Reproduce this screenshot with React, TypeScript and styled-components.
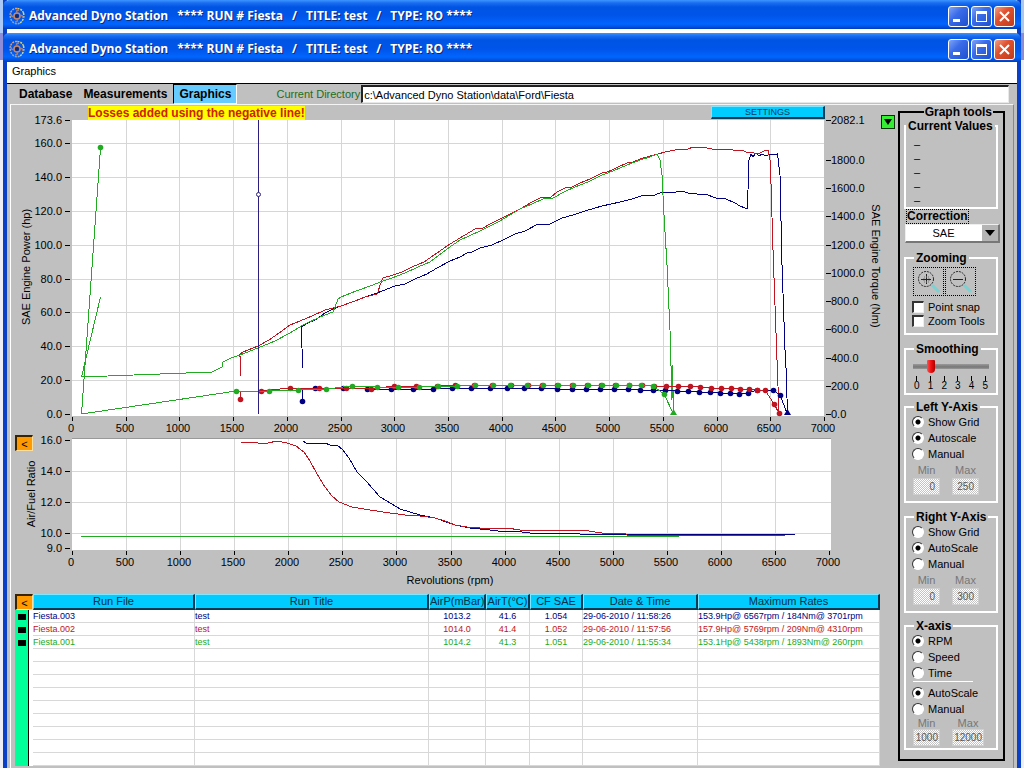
import React from "react";
import styled, { createGlobalStyle } from "styled-components";

const GlobalStyle = createGlobalStyle`
  *, *::before, *::after { box-sizing: border-box; }
  body {
    margin: 0;
    font-family: "Liberation Sans", Arial, sans-serif;
    font-size: 11px;
    color: #000;
  }
  button, input, select { font-family: inherit; font-size: inherit; color: inherit; border-radius: 0; margin: 0; }
`;

const NAVY = "#000080";
const RED = "#c01420";
const GREEN = "#22aa22";
const SILVER = "#c0c0c0";

/* ---------- window frame ---------- */

const Desktop = styled.div`
  min-height: 100vh;
  display: flex;
  flex-direction: column;
  padding: 0 3px;
  background: linear-gradient(#a9c8f5 0 33px, #8c8cd8 33px 60px, #eeeef6 60px);
`;

const BackWindow = styled.div`
  height: 33px;
  border: solid #0a3fc8;
  border-width: 0 4px;
  background: #fff;
`;

const Window = styled.main`
  flex: 1;
  display: flex;
  flex-direction: column;
  border: solid #0a3fc8;
  border-width: 0 4px;
  background: ${SILVER};
`;

const TitleBar = styled.header`
  display: flex;
  align-items: center;
  height: 29px;
  margin: 0 -4px;
  padding: 3px 6px 0 6px;
  border-radius: 6px 6px 0 0;
  background: linear-gradient(#3c95ff 0, #1a6df0 3px, #0054e3 7px, #0055ea 16px, #0066ff 24px, #0050e0 27px, #003cb8 29px);
`;

const TitleText = styled.h1`
  flex: 1;
  display: flex;
  gap: 9px;
  margin: 0 0 0 4px;
  font: 700 12px/18px "Open Sans", "Noto Sans", sans-serif;
  color: #fff;
  text-shadow: 1px 1px 0 #0a2a80;
  white-space: nowrap;
`;

const CaptionButtons = styled.div`
  display: flex;
  gap: 2px;
`;

const CaptionButton = styled.button<{ $close?: boolean }>`
  display: grid;
  place-items: center;
  width: 21px;
  height: 21px;
  padding: 0;
  border: 1px solid #fff;
  border-radius: 3px;
  background: ${(p) =>
    p.$close
      ? "linear-gradient(135deg, #f0a088, #e0512e 40%, #c03c1c)"
      : "linear-gradient(135deg, #7fa4f5, #3a6cea 40%, #1f50cc)"};
`;

const MenuBar = styled.nav`
  height: 21px;
  padding: 0 5px;
  background: #fff;
`;

const MenuItem = styled.button`
  display: block;
  height: 18px;
  padding: 0;
  border: 0;
  background: none;
`;

/* ---------- tab strip ---------- */

const TabStrip = styled.div`
  display: flex;
  align-items: center;
  gap: 1px;
  height: 21px;
  padding: 0 8px 0 7px;
  border-top: 1px solid #000;
`;

const Tab = styled.button<{ $active?: boolean }>`
  height: 20px;
  padding: 0 ${(p) => (p.$active ? 5 : 4)}px;
  border: 1px solid;
  border-color: ${(p) => (p.$active ? "#000 #fff #fff #000" : SILVER)};
  background: ${(p) => (p.$active ? "#66ccff" : SILVER)};
  font-size: 12px;
  font-weight: 700;
`;

const DirLabel = styled.label`
  margin-left: 38px;
  color: #1c6e1c;
`;

const DirInput = styled.input`
  flex: 1;
  min-width: 0;
  height: 18px;
  padding: 0 1px;
  border: solid;
  border-width: 2px 1px 1px 2px;
  border-color: #222 #e8e8e8 #e8e8e8 #222;
  background: #fff;
`;

/* ---------- body ---------- */

const Body = styled.div`
  flex: 1;
  display: grid;
  grid-template-columns: minmax(0, 1fr) 107px;
  align-items: start;
  margin: 0 3px;
  padding-right: 8px;
  border: solid;
  border-width: 1px 1px 0 1px;
  border-color: #f4f4f4 #888 #888 #fff;
`;

const NoticeRow = styled.div`
  display: flex;
  align-items: flex-start;
  height: 14px;
  padding: 0 3px 0 77px;
`;

const Notice = styled.strong`
  margin-top: 1px;
  background: #ffff00;
  color: #cc2200;
  font-size: 12px;
  line-height: 14px;
  white-space: nowrap;
`;

const SettingsButton = styled.button`
  width: 114px;
  height: 13px;
  margin: 1px 56px 0 auto;
  padding: 0;
  border: solid;
  border-width: 1px 2px 2px 1px;
  border-color: #7fe6ff #003c55 #003c55 #7fe6ff;
  background: #00ccff;
  color: #00405c;
  font-size: 9px;
  line-height: 9px;
`;

const ExpandButton = styled.button`
  display: grid;
  place-items: center;
  width: 14px;
  height: 14px;
  margin-top: 10px;
  padding: 0;
  border: 1px solid #003300;
  background: #33ee33;
`;

const ChartBox = styled.section`
  position: relative;
`;

const ChartSvg = styled.svg`
  display: block;
  width: 100%;
  height: auto;
  overflow: visible;
`;

const CollapseButton = styled.button<{ $overChart?: boolean }>`
  ${(p) => (p.$overChart ? "position: absolute; top: 1px; left: 4px;" : "display: block;")}
  width: 18px;
  height: 16px;
  padding: 0;
  border: solid;
  border-width: 2px 1px 1px 2px;
  border-color: #3a2400 #ffe0a0 #ffe0a0 #3a2400;
  background: #ff9900;
  font-size: 11px;
  line-height: 12px;
`;

/* ---------- runs table ---------- */

const RunTable = styled.table`
  width: calc(100% - 22px);
  margin-left: 4px;
  table-layout: fixed;
  border-collapse: separate;
  border-spacing: 0;
  background: #fff;
`;

const HeadCell = styled.th`
  height: 16px;
  padding: 0;
  border: solid;
  border-width: 1px 2px 2px 1px;
  border-color: #7fe6ff #003c55 #003c55 #7fe6ff;
  background: #00ccff;
  color: #003048;
  font-weight: 400;
  line-height: 13px;
  white-space: nowrap;
`;

const CornerCell = styled.th`
  height: 16px;
  padding: 0;
`;

const MarkerCell = styled.td`
  height: 13px;
  padding: 0 0 0 3px;
  line-height: 0;
  background: linear-gradient(to right, #00ff99 13px, #000 13px 14px, #fff 14px);
`;

const Marker = styled.span`
  display: block;
  width: 8px;
  height: 6px;
  background: #000;
`;

const Cell = styled.td<{ $color: string; $center?: boolean }>`
  height: 13px;
  padding: 0;
  border-right: 1px solid #d8d8d8;
  border-bottom: 1px solid #d8d8d8;
  color: ${(p) => p.$color};
  font-size: 9px;
  line-height: 12px;
  text-align: ${(p) => (p.$center ? "center" : "left")};
  white-space: nowrap;
`;

/* ---------- graph tools ---------- */

const Tools = styled.fieldset`
  display: flex;
  flex-direction: column;
  height: 656px;
  min-width: 0;
  margin: 0;
  padding: 0 5px 0 4px;
  border: 2px solid #000;
`;

const ToolsLegend = styled.legend`
  margin-left: auto;
  margin-right: 5px;
  padding: 0 1px;
  font-size: 12px;
  font-weight: 700;
  line-height: 14px;
`;

const Group = styled.fieldset<{ $height: number; $gap: number }>`
  height: ${(p) => p.$height}px;
  min-width: 0;
  margin: ${(p) => p.$gap}px 0 0;
  padding: 0 0 0 6px;
  border: 2px solid #fff;
`;

const GroupLegend = styled.legend<{ $wide?: boolean }>`
  margin-left: ${(p) => (p.$wide ? -6 : 2)}px;
  padding: 0 2px;
  font-size: 12px;
  font-weight: 700;
  line-height: 14px;
  white-space: nowrap;
`;

const ValueList = styled.ul`
  margin: 4px 0 0 2px;
  padding: 0;
  list-style: none;
  line-height: 14px;
`;

const CorrectionLabel = styled.label`
  align-self: flex-start;
  margin-left: 2px;
  border: 1px dotted #000;
  font-size: 12px;
  font-weight: 700;
  line-height: 13px;
`;

const SelectBox = styled.div`
  position: relative;
  margin: 0 -2px 0 1px;
  border: solid;
  border-width: 1px 2px 2px 1px;
  border-color: #eee #777 #777 #eee;
`;

const Select = styled.select`
  display: block;
  appearance: none;
  width: 100%;
  height: 16px;
  padding: 0 17px 0 0;
  border: 0;
  background: #fff;
  text-align: center;
  text-align-last: center;
`;

const SelectArrow = styled.span`
  position: absolute;
  top: 0;
  right: 0;
  display: grid;
  place-items: center;
  width: 16px;
  height: 16px;
  background: #b4b4b4;
  pointer-events: none;
`;

const ZoomButtons = styled.div`
  display: flex;
  gap: 1px;
  margin: 2px 0 4px 1px;
`;

const ZoomButton = styled.button`
  display: grid;
  place-items: center;
  width: 31px;
  height: 29px;
  padding: 0;
  border: 1px dotted #000;
  background: ${SILVER};
`;

const Option = styled.label<{ $tight?: boolean }>`
  display: flex;
  align-items: center;
  gap: 4px;
  height: ${(p) => (p.$tight ? 14 : 16)}px;
  white-space: nowrap;
`;

const Check = styled.input`
  appearance: none;
  width: 12px;
  height: 12px;
  border: solid;
  border-width: 2px 1px 1px 2px;
  border-color: #333 #eee #eee #333;
  background: #fff;
`;

const Radio = styled.input`
  appearance: none;
  width: 12px;
  height: 12px;
  border: 1px solid;
  border-color: #333 #fff #fff #333;
  border-radius: 50%;
  background: #fff;
  &:checked {
    background: radial-gradient(circle, #000 0 2px, #fff 3px);
  }
`;

const Slider = styled.input`
  display: block;
  appearance: none;
  width: 76px;
  height: 13px;
  margin: 4px 0 3px 1px;
  background: linear-gradient(transparent 4px, #999 4px, #777 7px, #999 9px, transparent 9px);
  &::-webkit-slider-thumb {
    appearance: none;
    width: 8px;
    height: 13px;
    border-radius: 1px 1px 4px 4px;
    background: linear-gradient(to right, #ff5050, #ee1111 50%, #b00000);
  }
`;

const Scale = styled.ol`
  display: flex;
  justify-content: space-between;
  width: 76px;
  margin: 0 0 0 1px;
  padding: 0 1px;
  list-style: none;
  font-size: 10px;
  line-height: 10px;
`;

const ScaleMark = styled.li`
  &::before {
    content: "";
    display: block;
    width: 1px;
    height: 5px;
    margin: 0 auto;
    background: #000;
  }
`;

const Limits = styled.div<{ $tight?: boolean }>`
  display: flex;
  gap: 12px;
  margin-left: 1px;
  line-height: ${(p) => (p.$tight ? 12 : 16)}px;
`;

const LimitField = styled.label<{ $wide?: boolean }>`
  display: flex;
  flex-direction: column;
  width: ${(p) => (p.$wide ? 32 : 27)}px;
  color: #777;
  text-align: center;
`;

const LimitInput = styled.input<{ $tight?: boolean }>`
  width: 100%;
  height: 17px;
  padding: 0 ${(p) => (p.$tight ? 1 : 4)}px 0 0;
  border: 1px solid #cfcfcf;
  background: repeating-conic-gradient(#fff 0 25%, #c4c4c4 0 50%) 0 0 / 2px 2px;
  color: #555;
  font-size: 10px;
  text-align: right;
`;

const Rule = styled.hr`
  width: 60px;
  height: 1px;
  margin: 0 0 3px 1px;
  border: 0;
  background: #fff;
`;

/* ---------- chart data (canvas units) ---------- */

type Pt = [number, number];

const powerRed =
  "240.5,376 240.5,357 239,355 243,352 258,346 269,340 279,333 290,325 300,321 312,316 325,310 341,306 355,301 365,297 377,294 378,292 380,285 383,278 393,275 402,272 412,267 424,262 437,253 450,244 460,238 475,229 479,228 483,228 490,224 500,219 510,214 522,208 532,202 540,198 551,197 557,192 565,188 572,187 580,183 590,179 602,173 607,172 612,170 618,167 627,163 633,162 640,159 650,156 658,154 665,152 675,150 688,149 693,147 707,148 712,149 733,150 738,151 742,150 748,153 752,152 756,154 760,153 764,151 768,150 770,160 771,184 773,250 776,333 779,413";
const powerGreen =
  "100.5,297 81.5,377 212,372 222,367 223,362 231,358 240,355 258,348 275,341 290,333 303,325 320,317 333,312 335,307 338,299 341,297 356,291 373,285 380,282 392,278 405,273 418,267 430,262 447,249 460,240 480,231 500,221 520,209 532,204 545,198 553,198 564,192 575,187 588,182 602,175 608,173 620,168 632,163 643,159 650,157 657,154 660,160 662,175 664,215 667,265 670,330 672,400 672.5,365 673.5,413";
const powerBlue =
  "302.5,368 301.5,327 308,323 315,320 325,313 333,309 341,306 355,301 365,297 377,293 395,286 405,284 415,279 427,274 437,268 450,261 460,257 467,253 472,252 480,248 492,245 505,239 515,234 525,231 538,224 550,224 562,218 573,215 585,211 602,206 611,204 620,202 632,199 641,196 655,195 662,192 670,193 682,191 688,193 697,194 705,194 716,198 726,199 735,203 740,206 745,208 747.5,208 748,190 749,160 751,154 753,157 756,153 759,156 762,154 766,156 770,154 773,155 777.5,154 780,175 782,265 785,350 786,368 787.5,413";

const torqueGreen: Pt[] = [
  [236, 391], [269, 391], [298, 390], [326, 389], [352, 386], [377, 387], [398, 387], [419, 387], [438, 386],
  [457, 386], [475, 385], [493, 385], [510, 385], [527, 385], [543, 385], [558, 385], [573, 385], [588, 385],
  [602, 385], [616, 385], [629, 385], [641, 385], [653, 386], [664, 394],
];
const torqueRed: Pt[] = [
  [261, 391], [290, 388], [319, 388], [346, 388], [371, 389], [394, 386], [416, 386], [437, 386], [455, 385],
  [474, 385], [492, 385], [511, 385], [528, 385], [542, 385], [557, 385], [572, 385], [587, 385], [601, 385],
  [615, 385], [629, 385], [642, 385], [654, 386], [666, 386], [678, 386], [690, 386], [700, 387], [711, 388],
  [721, 388], [731, 388], [740, 389], [749, 389], [757, 390], [765, 390], [774, 404], [779, 413],
];
const torqueBlue: Pt[] = [
  [315, 388], [343, 388], [367, 389], [391, 389], [413, 389], [433, 389], [452, 388], [471, 388], [490, 388],
  [507, 388], [524, 388], [541, 388], [557, 389], [572, 389], [586, 389], [600, 389], [614, 389], [628, 389],
  [640, 390], [653, 390], [665, 390], [677, 391], [688, 391], [699, 392], [710, 392], [720, 393], [730, 393],
  [739, 394], [748, 393], [757, 390], [773, 390], [780, 395],
];

const afrRed =
  "241,442 252,442 258,443 268,443 277,441 287,443 296,446 304,452 310,461 317,474 325,487 332,496 339,502 352,507 370,510 390,513 405,515 420,516 435,518 445,521 455,525 467,527 480,528 507,528 520,530 532,530 555,531 565,530 582,530 602,533 625,533 627,535 785,535";
const afrBlue =
  "303,441 306,443 325,443 330,445 338,446 342,449 349,458 357,472 366,481 380,497 392,504 400,509 410,512 420,515 435,518 455,525 470,528 490,530 505,532 513,531 530,533 560,534 573,533 580,534 630,534 792,535 795,534";

const thousands = Array.from({ length: 15 }, (_, i) => i * 500);
const rpmX = (rpm: number) => Math.round(72 + (rpm * 752) / 7000);
const afrX = (rpm: number) => Math.round(72 + (rpm * 757) / 7000);
const hpY = (hp: number) => Math.round(414 - (hp * 294) / 173.6);
const nmY = (nm: number) => Math.round(414 - (nm * 294) / 2082.1);
const afrY = (v: number) => Math.round(548 - (v - 9) * 15.5);

const join = (pts: Pt[]) => pts.map((p) => p.join(",")).join(" ");

const Line = styled.polyline`
  fill: none;
  stroke-width: 1;
  shape-rendering: crispEdges;
`;

const Grid = styled.path`
  fill: none;
  stroke: #d6d6d6;
  shape-rendering: crispEdges;
`;

const Ticks = styled(Grid)`
  stroke: #000;
`;

const Dots = ({ points, color }: { points: Pt[]; color: string }) => (
  <g fill={color}>
    {points.map(([x, y], i) => (
      <circle key={i} cx={x + 0.5} cy={y + 0.5} r={2.8} />
    ))}
  </g>
);

const PowerChart = () => {
  const hps = [173.6, 160, 140, 120, 100, 80, 60, 40, 20, 0];
  const nms = [2082.1, 1800, 1600, 1400, 1200, 1000, 800, 600, 400, 200, 0];
  return (
    <ChartSvg viewBox="11 119 887 315" role="img" aria-label="SAE engine power and torque by engine speed">
      <rect x={72} y={120} width={752} height={296} fill="#fff" />
      <Grid
        d={
          thousands.slice(1, -1).map((t) => `M${rpmX(t)}.5 120V416`).join("") +
          hps.slice(1, -1).map((v) => `M72 ${hpY(v)}.5H824`).join("")
        }
      />
      <Ticks
        d={
          thousands.map((t) => `M${rpmX(t)}.5 417V421`).join("") +
          hps.map((v) => `M65 ${hpY(v)}.5H70`).join("") +
          nms.map((v) => `M826 ${nmY(v)}.5H831`).join("")
        }
      />
      <g textAnchor="end">
        {hps.map((v) => <text key={v} x={62} y={hpY(v) + 4}>{v.toFixed(1)}</text>)}
      </g>
      <g>
        {nms.map((v) => <text key={v} x={831} y={nmY(v) + 4}>{v.toFixed(1)}</text>)}
      </g>
      <g textAnchor="middle">
        {thousands.map((t) => <text key={t} x={rpmX(t) - 1} y={432}>{t}</text>)}
      </g>
      <text textAnchor="middle" transform="translate(30 267) rotate(-90)">SAE Engine Power (hp)</text>
      <text textAnchor="middle" transform="translate(872 266) rotate(90)">SAE Engine Torque (Nm)</text>

      <Line points={powerBlue} stroke={NAVY} />
      <Line points={powerRed} stroke={RED} />
      <Line points={powerGreen} stroke={GREEN} />

      <Line points={"302.5,401 302.5,390 " + join(torqueBlue) + " 787,413"} stroke={NAVY} />
      <Dots points={[[302, 401], ...torqueBlue]} color={NAVY} />
      <path d="M784 415L787.500 409L791 415Z" fill={NAVY} />
      <Line points={"240.5,399 240.5,392 " + join(torqueRed)} stroke={RED} />
      <Dots points={[[240, 399], ...torqueRed]} color={RED} />
      <Line points={"100.500,148 81.500,414 223,393 " + join(torqueGreen) + " 673,413"} stroke={GREEN} />
      <Dots points={[[100, 147], ...torqueGreen]} color={GREEN} />
      <path d="M670 415L673.500 409L677 415Z" fill={GREEN} />

      <path d="M258.500 120V414" stroke="#2a1f80" fill="none" shapeRendering="crispEdges" />
      <circle cx={258.5} cy={194.5} r={2} fill="#fff" stroke="#2a1f80" />
    </ChartSvg>
  );
};

const AfrChart = () => {
  const ratios = [16, 14, 12, 10, 9];
  return (
    <ChartSvg viewBox="11 434 887 160" role="img" aria-label="Air/fuel ratio by engine speed">
      <rect x={72} y={439} width={759} height={111} fill="#fff" />
      <path d="M72 438.500H831" stroke="#999" />
      <Grid
        d={
          thousands.slice(1, -1).map((t) => `M${afrX(t)}.5 439V550`).join("") +
          ratios.slice(1, -1).map((v) => `M72 ${afrY(v)}.5H831`).join("")
        }
      />
      <Ticks
        d={
          thousands.map((t) => `M${afrX(t)}.5 551V555`).join("") +
          ratios.map((v) => `M65 ${afrY(v)}.5H70`).join("")
        }
      />
      <g textAnchor="end">
        {ratios.map((v) => <text key={v} x={62} y={afrY(v) + 4}>{v.toFixed(1)}</text>)}
      </g>
      <g textAnchor="middle">
        {thousands.map((t) => <text key={t} x={afrX(t) - 1} y={566}>{t}</text>)}
      </g>
      <text textAnchor="middle" transform="translate(35 494) rotate(-90)">Air/Fuel Ratio</text>
      <text textAnchor="middle" x={450} y={584}>Revolutions (rpm)</text>
      <Line points={afrBlue} stroke={NAVY} />
      <Line points={afrRed} stroke={RED} />
      <Line points="81,536.5 679,536.5" stroke={GREEN} />
    </ChartSvg>
  );
};

/* ---------- composed parts ---------- */

const AppLogo = () => (
  <svg width="16" height="18" viewBox="0 0 16 18" fill="none" strokeWidth="1.500" aria-hidden="true">
    <path d="M8 1.500C5 1 2.500 3 1.500 6" stroke="#e8a070" strokeDasharray="2 1" />
    <path d="M14.500 6C13.500 3 11 1.500 8 1.500" stroke="#d8d070" strokeDasharray="2 1" />
    <path d="M14.500 6C15.500 10 14 14 11 16" stroke="#c8d8a0" strokeDasharray="2 1" />
    <path d="M1.500 6C.5 10 2 14 5 16C7 17 9 17 11 16" stroke="#90a8c8" strokeDasharray="2 1" />
    <circle cx="8" cy="9" r="3" stroke="#c08870" />
    <path d="M8 6C7 4 8 3 10 3M11 9C13 8 14 9 14 11M8 12C9 14 8 15 6 15M5 9C3 10 2 9 2 7" stroke="#a08080" />
    <circle cx="8" cy="9" r="2" fill="#102870" />
  </svg>
);

const Caption = () => (
  <TitleBar>
    <AppLogo />
    <TitleText>
      <span>Advanced Dyno Station</span>
      <span>**** RUN # Fiesta</span>
      <span>/</span>
      <span>TITLE: test</span>
      <span>/</span>
      <span>TYPE: RO ****</span>
    </TitleText>
    <CaptionButtons>
      <CaptionButton aria-label="Minimize">
        <svg width="15" height="15" viewBox="0 0 15 15"><rect x="2" y="10" width="7" height="3" fill="#fff" /></svg>
      </CaptionButton>
      <CaptionButton aria-label="Maximize">
        <svg width="15" height="15" viewBox="0 0 15 15"><path d="M2 2H13V13H2ZM3 5V12H12V5Z" fill="#fff" fillRule="evenodd" /></svg>
      </CaptionButton>
      <CaptionButton $close aria-label="Close">
        <svg width="15" height="15" viewBox="0 0 15 15"><path d="M3 3L12 12M12 3L3 12" stroke="#fff" strokeWidth="2" /></svg>
      </CaptionButton>
    </CaptionButtons>
  </TitleBar>
);

const runs = [
  { color: NAVY, cells: ["Fiesta.003", "test", "1013.2", "41.6", "1.054", "29-06-2010 / 11:58:26", "153.9Hp@ 6567rpm / 184Nm@ 3701rpm"] },
  { color: RED, cells: ["Fiesta.002", "test", "1014.0", "41.4", "1.052", "29-06-2010 / 11:57:56", "157.9Hp@ 5769rpm / 209Nm@ 4310rpm"] },
  { color: GREEN, cells: ["Fiesta.001", "test", "1014.2", "41.3", "1.051", "29-06-2010 / 11:55:34", "153.1Hp@ 5438rpm / 1893Nm@ 260rpm"] },
];
const headings = ["Run File", "Run Title", "AirP(mBar)", "AirT(°C)", "CF SAE", "Date & Time", "Maximum Rates"];
const columnWidths = [162, undefined, 57, 44, 53, 115, 182];
const emptyRows = Array.from({ length: 9 }, (_, i) => i);

const Runs = () => (
  <RunTable>
    <colgroup>
      <col width={18} />
      {columnWidths.map((w, i) => <col key={i} width={w} />)}
    </colgroup>
    <thead>
      <tr>
        <CornerCell><CollapseButton aria-label="Collapse runs">&lt;</CollapseButton></CornerCell>
        {headings.map((h) => <HeadCell key={h}>{h}</HeadCell>)}
      </tr>
    </thead>
    <tbody>
      {runs.map((run) => (
        <tr key={run.cells[0]}>
          <MarkerCell><Marker /></MarkerCell>
          {run.cells.map((c, i) => <Cell key={i} $color={run.color} $center={i > 1 && i < 5}>{c}</Cell>)}
        </tr>
      ))}
      {emptyRows.map((r) => (
        <tr key={r}>
          <MarkerCell />
          {headings.map((h) => <Cell key={h} $color={NAVY} />)}
        </tr>
      ))}
    </tbody>
  </RunTable>
);

const RadioOption = ({ name, label, on }: { name: string; label: string; on?: boolean }) => (
  <Option>
    <Radio type="radio" name={name} defaultChecked={on} />
    {label}
  </Option>
);

const MinMax = ({ min, max, tight }: { min: string; max: string; tight?: boolean }) => (
  <Limits $tight={tight}>
    <LimitField>Min<LimitInput $tight={tight} disabled defaultValue={min} /></LimitField>
    <LimitField $wide={tight}>Max<LimitInput $tight={tight} disabled defaultValue={max} /></LimitField>
  </Limits>
);

const Magnifier = ({ plus }: { plus?: boolean }) => (
  <svg width="27" height="25" viewBox="0 0 27 25" fill="none" aria-hidden="true">
    <path d="M17 16L24 23" stroke="#7fd0d0" strokeWidth="3" />
    <circle cx="11" cy="10" r="7.500" stroke="#222" strokeDasharray="2 1" />
    <path d={plus ? "M6 10.500H16M11.500 5V15" : "M6 10.500H16"} stroke="#222" />
    {plus && <path d="M9 8H14V13H9Z" stroke="#777" strokeDasharray="1 1" />}
  </svg>
);

const GraphTools = () => (
  <Tools>
    <ToolsLegend>Graph tools</ToolsLegend>
    <Group $height={90} $gap={0}>
      <GroupLegend $wide>Current Values</GroupLegend>
      <ValueList>
        {[0, 1, 2, 3, 4].map((i) => <li key={i}>–</li>)}
      </ValueList>
    </Group>
    <CorrectionLabel htmlFor="correction">Correction</CorrectionLabel>
    <SelectBox>
      <Select id="correction" defaultValue="SAE">
        <option>SAE</option>
      </Select>
      <SelectArrow>
        <svg width="10" height="6" viewBox="0 0 10 6"><path d="M0 0H10L5 6Z" fill="#000" /></svg>
      </SelectArrow>
    </SelectBox>
    <Group $height={84} $gap={8}>
      <GroupLegend>Zooming</GroupLegend>
      <ZoomButtons>
        <ZoomButton aria-label="Zoom in"><Magnifier plus /></ZoomButton>
        <ZoomButton aria-label="Zoom out"><Magnifier /></ZoomButton>
      </ZoomButtons>
      <Option $tight><Check type="checkbox" />Point snap</Option>
      <Option $tight><Check type="checkbox" />Zoom Tools</Option>
    </Group>
    <Group $height={53} $gap={7}>
      <GroupLegend>Smoothing</GroupLegend>
      <Slider type="range" min={0} max={5} defaultValue={1} aria-label="Smoothing" />
      <Scale>
        {[0, 1, 2, 3, 4, 5].map((n) => <ScaleMark key={n}>{n}</ScaleMark>)}
      </Scale>
    </Group>
    <Group $height={103} $gap={5}>
      <GroupLegend>Left Y-Axis</GroupLegend>
      <RadioOption name="left-grid" label="Show Grid" on />
      <RadioOption name="left-scale" label="Autoscale" on />
      <RadioOption name="left-scale" label="Manual" />
      <MinMax min="0" max="250" />
    </Group>
    <Group $height={103} $gap={7}>
      <GroupLegend>Right Y-Axis</GroupLegend>
      <RadioOption name="right-grid" label="Show Grid" />
      <RadioOption name="right-scale" label="AutoScale" on />
      <RadioOption name="right-scale" label="Manual" />
      <MinMax min="0" max="300" />
    </Group>
    <Group $height={131} $gap={6}>
      <GroupLegend>X-axis</GroupLegend>
      <RadioOption name="x-source" label="RPM" on />
      <RadioOption name="x-source" label="Speed" />
      <RadioOption name="x-source" label="Time" />
      <Rule />
      <RadioOption name="x-scale" label="AutoScale" on />
      <RadioOption name="x-scale" label="Manual" />
      <MinMax min="1000" max="12000" tight />
    </Group>
  </Tools>
);

export default function App() {
  return (
    <>
      <GlobalStyle />
      <Desktop>
        <BackWindow><Caption /></BackWindow>
        <Window>
          <Caption />
          <MenuBar><MenuItem>Graphics</MenuItem></MenuBar>
          <TabStrip>
            <Tab>Database</Tab>
            <Tab>Measurements</Tab>
            <Tab $active>Graphics</Tab>
            <DirLabel htmlFor="directory">Current Directory</DirLabel>
            <DirInput id="directory" defaultValue={"c:\\Advanced Dyno Station\\data\\Ford\\Fiesta"} />
          </TabStrip>
          <Body>
            <div>
              <NoticeRow>
                <Notice>Losses added using the negative line!</Notice>
                <SettingsButton>SETTINGS</SettingsButton>
                <ExpandButton aria-label="Graph menu">
                  <svg width="8" height="6" viewBox="0 0 8 6"><path d="M0 0H8L4 6Z" fill="#000" /></svg>
                </ExpandButton>
              </NoticeRow>
              <ChartBox><PowerChart /></ChartBox>
              <ChartBox>
                <AfrChart />
                <CollapseButton $overChart aria-label="Collapse chart">&lt;</CollapseButton>
              </ChartBox>
              <Runs />
            </div>
            <GraphTools />
          </Body>
        </Window>
      </Desktop>
    </>
  );
}
